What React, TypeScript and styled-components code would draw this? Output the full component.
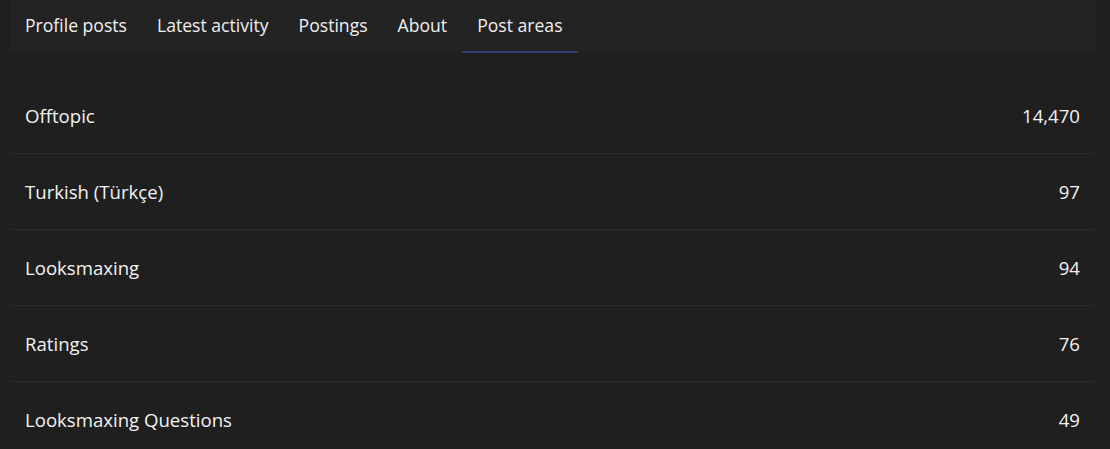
import React from "react";
import styled, { createGlobalStyle } from "styled-components";

const GlobalStyle = createGlobalStyle`
	html, body {
		margin: 0;
		padding: 0;
		background: #1f1f1f;
	}
	body {
		font-family: "Open Sans", "Noto Sans", sans-serif;
		color: #f2f2f2;
	}
`;

const Page = styled.div`
	padding: 0 15px 0 10px;
	width: 1085px;
`;

const TabBar = styled.nav`
	display: flex;
	height: 53px;
	background: #232323;
`;

const Tab = styled.a<{ active?: boolean }>`
	display: flex;
	align-items: center;
	padding: 0 15px 2px;
	font-size: 17.6px;
	color: #f0f0f0;
	border-bottom: 2px solid ${({ active }) => (active ? "#2d3e70" : "transparent")};
	cursor: pointer;
`;

const List = styled.div`
	margin-top: 25px;
`;

const Row = styled.div`
	display: flex;
	justify-content: space-between;
	align-items: center;
	height: 75px;
	padding: 0 15px;
	border-top: 1px solid #2a2a2a;
	font-size: 18.6px;
	color: #f2f2f2;

	&:first-child {
		border-top: none;
	}
`;

const tabs = ["Profile posts", "Latest activity", "Postings", "About", "Post areas"];

const areas = [
	{ name: "Offtopic", count: "14,470" },
	{ name: "Turkish (Türkçe)", count: "97" },
	{ name: "Looksmaxing", count: "94" },
	{ name: "Ratings", count: "76" },
	{ name: "Looksmaxing Questions", count: "49" },
];

export default function App() {
	return (
		<>
			<GlobalStyle />
			<Page>
				<TabBar>
					{tabs.map((t) => (
						<Tab key={t} active={t === "Post areas"}>
							{t}
						</Tab>
					))}
				</TabBar>
				<List>
					{areas.map((a) => (
						<Row key={a.name}>
							<span>{a.name}</span>
							<span>{a.count}</span>
						</Row>
					))}
				</List>
			</Page>
		</>
	);
}
